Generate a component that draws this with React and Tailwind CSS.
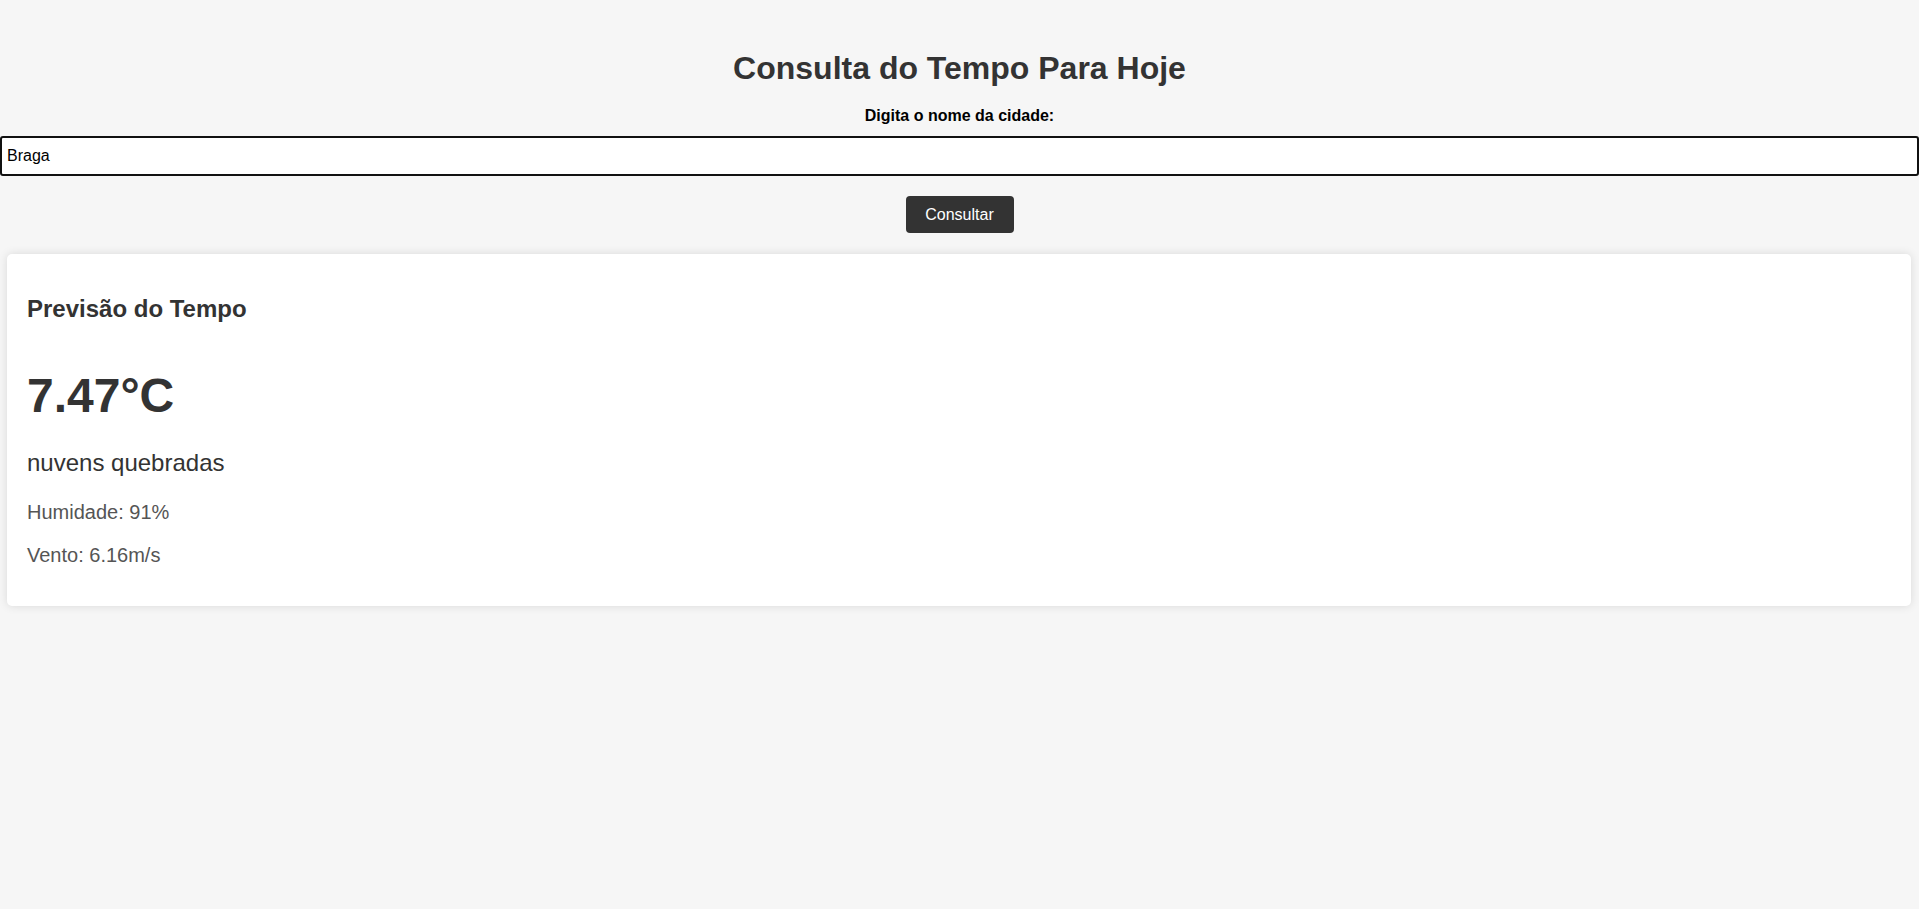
import React from "react";

export default function App() {
  return (
    <div
      className="min-h-[909px] w-full bg-[#f6f6f6] pt-[52px]"
      style={{ fontFamily: '"Liberation Sans", Arial, sans-serif' }}
    >
      <h1 className="text-center text-[32px] font-bold leading-[32px] text-[#333]">
        Consulta do Tempo Para Hoje
      </h1>
      <label
        htmlFor="city"
        className="mt-[24px] block text-center text-[16px] font-bold leading-[16px] text-black"
      >
        Digita o nome da cidade:
      </label>
      <input
        id="city"
        type="text"
        defaultValue="Braga"
        className="mt-[12px] block h-[40px] w-full rounded-[3px] border-2 border-[#111] bg-white pl-[5px] text-[16px] text-black outline-none"
      />
      <div className="mt-[20px] flex justify-center">
        <button className="h-[37px] w-[108px] rounded-[4px] bg-[#333] text-[16px] leading-none text-white">
          Consultar
        </button>
      </div>
      <div className="ml-[7px] mr-[8px] mt-[21px] rounded-[5px] bg-white pb-[41px] pl-[20px] pt-[43px] shadow-[0_0_10px_rgba(0,0,0,0.12)]">
        <h2 className="text-[24px] font-bold leading-[24px] text-[#333]">
          Previsão do Tempo
        </h2>
        <p className="mt-[51px] text-[48px] font-bold leading-[48px] text-[#333]">
          7.47°C
        </p>
        <p className="mt-[31px] text-[24px] leading-[24px] text-[#333]">
          nuvens quebradas
        </p>
        <p className="mt-[27px] text-[20px] leading-[20px] text-[#555]">
          Humidade: 91%
        </p>
        <p className="mt-[23px] text-[20px] leading-[20px] text-[#555]">
          Vento: 6.16m/s
        </p>
      </div>
    </div>
  );
}
